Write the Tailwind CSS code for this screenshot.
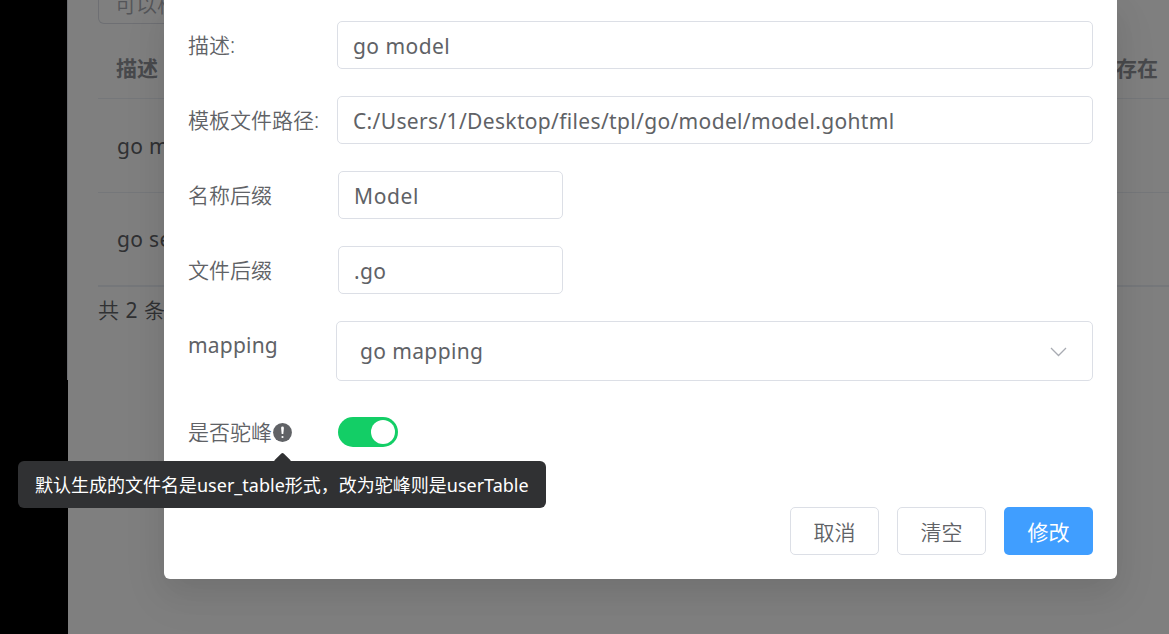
<!DOCTYPE html>
<html lang="zh-CN">
<head>
<meta charset="utf-8">
<title>go model</title>
<script src="https://cdn.jsdelivr.net/npm/@tailwindcss/browser@4"></script>
</head>
<body>
<div class="relative flex w-[1169px] h-[634px] overflow-hidden bg-black font-['Noto_Sans','Noto_Sans_CJK_SC',sans-serif] text-[21px] leading-[30px] text-[#606266] whitespace-nowrap">
  <!-- page under the dialog -->
  <div class="w-[67px] shrink-0"></div>
  <div class="w-px h-[380px] shrink-0 bg-[#dcdfe6]"></div>
  <main class="flex-1 min-w-0 bg-white pl-[30px]">
    <div class="flex items-end h-[24px] w-[330px] border border-t-0 border-[#dcdfe6] rounded-b-[6px] pl-[16px] pb-[4px]">
      <span class="text-[#a8abb2] font-[350]">可以根据描述搜索</span>
    </div>
    <div class="mt-[17px] h-[58px] border-b border-[#ebeef5] flex items-center justify-between pl-[18px] pr-[11px] pb-[3px] font-bold text-[#909399]">
      <span>描述</span><span>是否存在</span>
    </div>
    <div class="h-[94px] border-b border-[#ebeef5] flex items-center pl-[19px] tracking-[0.34px]">go model</div>
    <div class="h-[94px] border-b-2 border-[#ebeef5] flex items-center pl-[19px] tracking-[0.34px]">go service</div>
    <div class="mt-[8px] tracking-[0.5px] font-[350]">共 <span class="font-normal">2</span> 条</div>
  </main>

  <!-- dialog -->
  <div class="absolute inset-0 bg-black/50 pl-[164px]">
    <section class="w-[953px] h-[579px] rounded-b-[6px] bg-white px-[24px] pt-[21px] shadow-[0_18px_48px_6px_rgba(0,0,0,0.04),0_12px_30px_rgba(0,0,0,0.08)]">
      <div class="flex flex-col gap-[27px]">
        <div class="flex h-[48px] items-center">
          <label class="w-[149px] font-[350]">描述:</label>
          <div class="flex h-full flex-1 items-center rounded-[5px] border border-[#dcdfe6] px-[15px] pt-[2px] tracking-[0.45px]"><span>go model</span></div>
        </div>
        <div class="flex h-[48px] items-center">
          <label class="w-[149px] font-[350]">模板文件路径:</label>
          <div class="flex h-full flex-1 items-center rounded-[5px] border border-[#dcdfe6] px-[15px] pt-[2px] tracking-[0.34px]"><span>C:/Users/1/Desktop/files/tpl/go/model/model.gohtml</span></div>
        </div>
        <div class="flex h-[48px] items-center">
          <label class="w-[150px] font-[350]">名称后缀</label>
          <div class="flex h-full w-[225px] items-center rounded-[5px] border border-[#dcdfe6] px-[15px] pt-[2px] tracking-[0.6px]"><span>Model</span></div>
        </div>
        <div class="flex h-[48px] items-center">
          <label class="w-[150px] font-[350]">文件后缀</label>
          <div class="flex h-full w-[225px] items-center rounded-[5px] border border-[#dcdfe6] px-[15px] pt-[2px] tracking-[0.34px]"><span>.go</span></div>
        </div>
        <div class="flex h-[60px] items-start">
          <label class="w-[148px] pt-[9px] tracking-[0.2px]">mapping</label>
          <div class="flex h-full flex-1 items-center justify-between rounded-[5px] border border-[#dcdfe6] pl-[23px] pr-[25px] tracking-[0.37px]">
            <span>go mapping</span>
            <svg class="mt-[2px] h-[10px] w-[17px]" viewBox="0 0 17 10" fill="none" stroke="#a8abb2" stroke-width="1.3"><path d="M1 1 8.5 8.5 16 1"/></svg>
          </div>
        </div>
        <div class="flex h-[48px] items-center">
          <div class="flex w-[150px] items-center font-[350]">
            <span>是否驼峰</span>
            <span class="relative h-[19px] w-[19px] ml-[1px]">
              <svg class="h-[19px] w-[19px]" viewBox="0 0 19 19"><circle cx="9.5" cy="9.5" r="9.4" fill="#606266"/><path d="M8.1 4.9a1.4 1.4 0 0 1 2.8 0L10.3 11H8.7Z" fill="#fff"/><circle cx="9.5" cy="14" r="1.1" fill="#fff"/></svg>
              <!-- tooltip -->
              <span class="absolute left-[3px] top-[32px] h-[13px] w-[13px] rotate-45 rounded-[2px] bg-[#303133]"></span>
              <span class="absolute -left-[255px] top-[38px] flex h-[47px] w-[528px] items-center rounded-[6px] bg-[#303133] pl-[17px] pt-[2px] text-[18px] font-normal text-white"><span>默认生成的文件名是user_table形式，改为驼峰则是userTable</span></span>
            </span>
          </div>
          <div class="flex h-[30px] w-[60px] items-center justify-end rounded-full bg-[#13ce66] pr-[3px]"><div class="h-[24px] w-[24px] rounded-full bg-white"></div></div>
        </div>
      </div>
      <div class="mt-[51px] flex justify-end gap-[18px] font-[350]">
        <button class="h-[48px] w-[89px] rounded-[5px] border border-[#dcdfe6] pt-[2px]">取消</button>
        <button class="h-[48px] w-[89px] rounded-[5px] border border-[#dcdfe6] pt-[2px]">清空</button>
        <button class="h-[48px] w-[89px] rounded-[5px] bg-[#409eff] pt-[2px] text-white font-normal">修改</button>
      </div>
    </section>
  </div>
</div>
</body>
</html>
